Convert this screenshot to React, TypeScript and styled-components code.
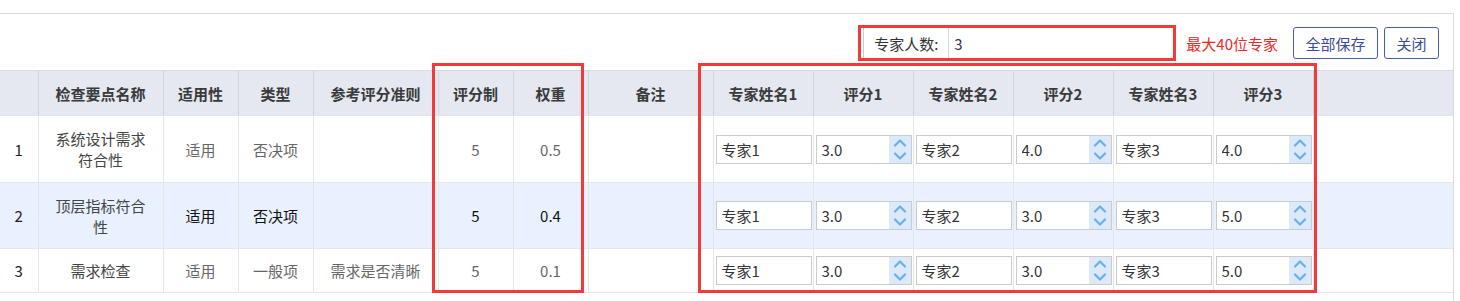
import styled, { createGlobalStyle } from 'styled-components';

const GlobalStyle = createGlobalStyle`
  html, body {
    margin: 0;
    padding: 0;
    background: #fff;
  }
  body {
    font-family: "Noto Sans CJK SC", "Noto Sans", sans-serif;
    font-size: 15px;
    color: #333;
  }
`;

const Page = styled.div`
  position: relative;
  width: 1460px;
  height: 301px;
  overflow: hidden;
  padding-top: 13px;
  box-sizing: border-box;
`;

const Panel = styled.div`
  width: 1454px;
  box-sizing: border-box;
  border-top: 1px solid #dcdcdc;
  border-right: 1px solid #dcdcdc;
  height: 300px;
`;

const Toolbar = styled.div`
  display: flex;
  justify-content: flex-end;
  align-items: center;
  height: 56px;
  padding-right: 14px;
  padding-top: 2px;
  box-sizing: border-box;
`;

const CountField = styled.div`
  display: flex;
  align-items: stretch;
  height: 32px;
  box-sizing: border-box;
  border: 1px solid #ccc;
  margin-right: 12px;
`;

const FieldLabel = styled.span`
  display: flex;
  align-items: center;
  width: 85px;
  box-sizing: border-box;
  padding: 0 0 0 10px;
  border-right: 1px solid #d8d8d8;
  color: #333;
  white-space: nowrap;
`;

const FieldInput = styled.input`
  width: 224px;
  box-sizing: border-box;
  border: none;
  outline: none;
  padding: 0 5px;
  font: inherit;
  color: #334;
  background: #fff;
`;

const Hint = styled.span`
  color: #f52525;
  margin-right: 15px;
  white-space: nowrap;
`;

const ToolButton = styled.button`
  height: 32px;
  padding: 0 11.5px;
  margin-left: 6px;
  border: 1px solid #4a5aa8;
  border-radius: 3px;
  background: #fff;
  color: #3b4a9c;
  font: inherit;
  cursor: pointer;
  &:first-of-type {
    margin-left: 0;
  }
`;

const Table = styled.table`
  width: 1453px;
  table-layout: fixed;
  border-collapse: collapse;
`;

const HeadCell = styled.th`
  height: 44px;
  padding: 0;
  background: #e5e8f0;
  border-top: 1px solid #d9dbe0;
  border-left: 1px solid #d2d5dc;
  border-bottom: 1px solid #e2e4e9;
  font-weight: 700;
  color: #3a3a3a;
  text-align: center;
  &:first-child {
    border-left: none;
  }
`;

const Row = styled.tr<{ $active?: boolean; $h: number }>`
  height: ${(p) => p.$h}px;
  background: ${(p) => (p.$active ? '#e8f1fd' : '#fff')};
  color: ${(p) => (p.$active ? '#111' : '#666')};
`;

const Cell = styled.td<{ $tone?: 'index' | 'name' }>`
  padding: 0 12px;
  text-align: center;
  border-left: 1px solid #e6e6e6;
  border-bottom: 1px solid #e6e6e6;
  line-height: 21px;
  color: ${(p) => (p.$tone === 'index' ? '#222' : p.$tone === 'name' ? '#444' : 'inherit')};
  &:first-child {
    border-left: none;
  }
`;

const ExpertCell = styled.td`
  padding: 0 1px 0 2px;
  border-left: 1px solid #e6e6e6;
  border-bottom: 1px solid #e6e6e6;
`;

const InputBox = styled.div`
  display: flex;
  height: 29px;
  box-sizing: border-box;
  border: 1px solid #cbcbcb;
  background: #fff;
`;

const BoxInput = styled.input`
  flex: 1;
  min-width: 0;
  border: none;
  outline: none;
  padding: 0 5px;
  font: inherit;
  color: #333;
  background: transparent;
`;

const Spinner = styled.span`
  width: 22px;
  background: #dce9fb;
  display: flex;
  align-items: center;
  justify-content: center;
`;

const Mark = styled.div<{ $l: number; $t: number; $w: number; $h: number }>`
  position: absolute;
  left: ${(p) => p.$l}px;
  top: ${(p) => p.$t}px;
  width: ${(p) => p.$w}px;
  height: ${(p) => p.$h}px;
  box-sizing: border-box;
  border: 3px solid #f23a3a;
  pointer-events: none;
`;

const columns = [
  { title: '', width: 38 },
  { title: '检查要点名称', width: 125 },
  { title: '适用性', width: 75 },
  { title: '类型', width: 75 },
  { title: '参考评分准则', width: 125 },
  { title: '评分制', width: 75 },
  { title: '权重', width: 75 },
  { title: '备注', width: 125 },
  { title: '专家姓名1', width: 100 },
  { title: '评分1', width: 100 },
  { title: '专家姓名2', width: 100 },
  { title: '评分2', width: 100 },
  { title: '专家姓名3', width: 100 },
  { title: '评分3', width: 100 },
  { title: '', width: 140 },
];

const rows = [
  {
    idx: 1,
    name: '系统设计需求符合性',
    applicable: '适用',
    type: '否决项',
    rule: '',
    scale: 5,
    weight: '0.5',
    experts: [
      ['专家1', '3.0'],
      ['专家2', '4.0'],
      ['专家3', '4.0'],
    ],
    height: 67,
  },
  {
    idx: 2,
    name: '顶层指标符合性',
    applicable: '适用',
    type: '否决项',
    rule: '',
    scale: 5,
    weight: '0.4',
    experts: [
      ['专家1', '3.0'],
      ['专家2', '3.0'],
      ['专家3', '5.0'],
    ],
    height: 66,
    active: true,
  },
  {
    idx: 3,
    name: '需求检查',
    applicable: '适用',
    type: '一般项',
    rule: '需求是否清晰',
    scale: 5,
    weight: '0.1',
    experts: [
      ['专家1', '3.0'],
      ['专家2', '3.0'],
      ['专家3', '5.0'],
    ],
    height: 44,
  },
];

function SpinIcon() {
  return (
    <svg width="22" height="27" viewBox="0 0 22 27" fill="none">
      <path d="M6 9.5 L11 4.5 L16 9.5" stroke="#6aafec" strokeWidth="2.2" strokeLinecap="round" strokeLinejoin="round" />
      <path d="M6 17.5 L11 22.5 L16 17.5" stroke="#6aafec" strokeWidth="2.2" strokeLinecap="round" strokeLinejoin="round" />
    </svg>
  );
}

export default function App() {
  return (
    <Page>
      <GlobalStyle />
      <Panel>
        <Toolbar>
          <CountField>
            <FieldLabel>专家人数:</FieldLabel>
            <FieldInput defaultValue="3" />
          </CountField>
          <Hint>最大40位专家</Hint>
          <ToolButton>全部保存</ToolButton>
          <ToolButton>关闭</ToolButton>
        </Toolbar>
        <Table>
          <colgroup>
            {columns.map((c, i) => (
              <col key={i} style={{ width: c.width }} />
            ))}
          </colgroup>
          <thead>
            <tr>
              {columns.map((c, i) => (
                <HeadCell key={i}>{c.title}</HeadCell>
              ))}
            </tr>
          </thead>
          <tbody>
            {rows.map((r) => (
              <Row key={r.idx} $h={r.height} $active={r.active}>
                <Cell $tone="index">{r.idx}</Cell>
                <Cell $tone="name">{r.name}</Cell>
                <Cell>{r.applicable}</Cell>
                <Cell>{r.type}</Cell>
                <Cell>{r.rule}</Cell>
                <Cell>{r.scale}</Cell>
                <Cell>{r.weight}</Cell>
                <Cell />
                {r.experts.map(([who, score]) => [
                  <ExpertCell key={who}>
                    <InputBox>
                      <BoxInput defaultValue={who} />
                    </InputBox>
                  </ExpertCell>,
                  <ExpertCell key={who + '-s'}>
                    <InputBox>
                      <BoxInput defaultValue={score} />
                      <Spinner>
                        <SpinIcon />
                      </Spinner>
                    </InputBox>
                  </ExpertCell>,
                ])}
                <Cell />
              </Row>
            ))}
          </tbody>
        </Table>
      </Panel>
      <Mark $l={858} $t={25} $w={318} $h={36} />
      <Mark $l={432} $t={63} $w={152} $h={230} />
      <Mark $l={698} $t={63} $w={619} $h={230} />
    </Page>
  );
}
